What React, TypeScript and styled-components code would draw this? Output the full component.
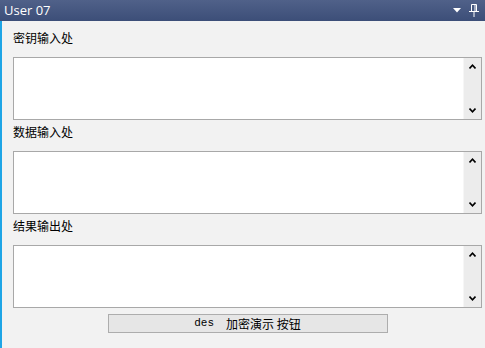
import React from 'react';
import styled, { createGlobalStyle } from 'styled-components';

const Global = createGlobalStyle`
  html, body {
    margin: 0;
    padding: 0;
    background: #f2f2f2;
  }
`;

const Window = styled.div`
  width: 485px;
  height: 348px;
  display: flex;
  flex-direction: column;
  background: #f2f2f2;
  overflow: hidden;
`;

const TitleBar = styled.div`
  height: 21px;
  flex: none;
  display: flex;
  align-items: center;
  justify-content: space-between;
  padding: 0 6px 0 4px;
  background: linear-gradient(#506189, #3c4e78);
  color: #ffffff;
  font: 13px/21px 'Open Sans', 'Noto Sans', sans-serif;
`;

const TitleIcons = styled.div`
  display: flex;
  align-items: center;
  gap: 8px;
`;

const Body = styled.div`
  flex: 1;
  display: flex;
  flex-direction: column;
  border-left: 2px solid #1ea5e6;
  padding: 5px 3px 0 11px;
  font-family: 'Noto Sans CJK SC', 'Noto Sans', sans-serif;
  font-size: 12px;
  color: #000;
`;

const Label = styled.div`
  height: 24px;
  line-height: 24px;
  margin-bottom: 7px;
`;

const Field = styled.div`
  position: relative;
  height: 63px;
  box-sizing: border-box;
  border: 1px solid #a8a8a8;
  background: #ffffff;
  display: flex;
`;

const Input = styled.textarea`
  flex: 1;
  border: none;
  outline: none;
  resize: none;
  background: transparent;
  font: inherit;
  padding: 2px;
`;

const ScrollBar = styled.div`
  width: 17px;
  display: flex;
  flex-direction: column;
  justify-content: space-between;
  background: #ececec;
  border-left: 1px solid #f6f6f6;
`;

const ScrollButton = styled.div`
  height: 17px;
  display: flex;
  align-items: center;
  justify-content: center;
`;

const ButtonRow = styled.div`
  display: flex;
  justify-content: center;
  margin-top: 6px;
`;

const ActionButton = styled.button`
  width: 280px;
  height: 19px;
  box-sizing: border-box;
  border: 1px solid #adadad;
  background: #e6e6e6;
  padding: 0;
  font-family: 'Noto Sans CJK SC', sans-serif;
  font-size: 12px;
  line-height: 17px;
  color: #000;
  display: flex;
  align-items: center;
  justify-content: center;
  gap: 12px;
`;

const Mono = styled.span`
  font-family: 'Liberation Mono', monospace;
  font-size: 11px;
`;

const Chevron = ({ up }: { up?: boolean }) => (
  <svg width="7" height="5" viewBox="0 0 7 5">
    <path
      d={up ? 'M0.5 4.5 L3.5 1.2 L6.5 4.5' : 'M0.5 0.5 L3.5 3.8 L6.5 0.5'}
      fill="none"
      stroke="#000"
      strokeWidth="1.6"
    />
  </svg>
);

const Box = () => (
  <Field>
    <Input />
    <ScrollBar>
      <ScrollButton>
        <Chevron up />
      </ScrollButton>
      <ScrollButton>
        <Chevron />
      </ScrollButton>
    </ScrollBar>
  </Field>
);

const sections = ['密钥输入处', '数据输入处', '结果输出处'];

export default function App() {
  return (
    <Window>
      <Global />
      <TitleBar>
        <span>User 07</span>
        <TitleIcons>
          <svg width="8" height="5" viewBox="0 0 8 5">
            <path d="M0 0 H8 L4 4.5 Z" fill="#fff" />
          </svg>
          <svg width="10" height="13" viewBox="0 0 10 13">
            <path
              d="M2.5 0.5 H7.5 V7.5 H2.5 Z M0 7.5 H10 M5 7.5 V13 M6 1 V7"
              fill="none"
              stroke="#fff"
              strokeWidth="1"
            />
          </svg>
        </TitleIcons>
      </TitleBar>
      <Body>
        {sections.map((s) => (
          <React.Fragment key={s}>
            <Label>{s}</Label>
            <Box />
          </React.Fragment>
        ))}
        <ButtonRow>
          <ActionButton>
            <Mono>des</Mono>
            <span>加密演示 按钮</span>
          </ActionButton>
        </ButtonRow>
      </Body>
    </Window>
  );
}
